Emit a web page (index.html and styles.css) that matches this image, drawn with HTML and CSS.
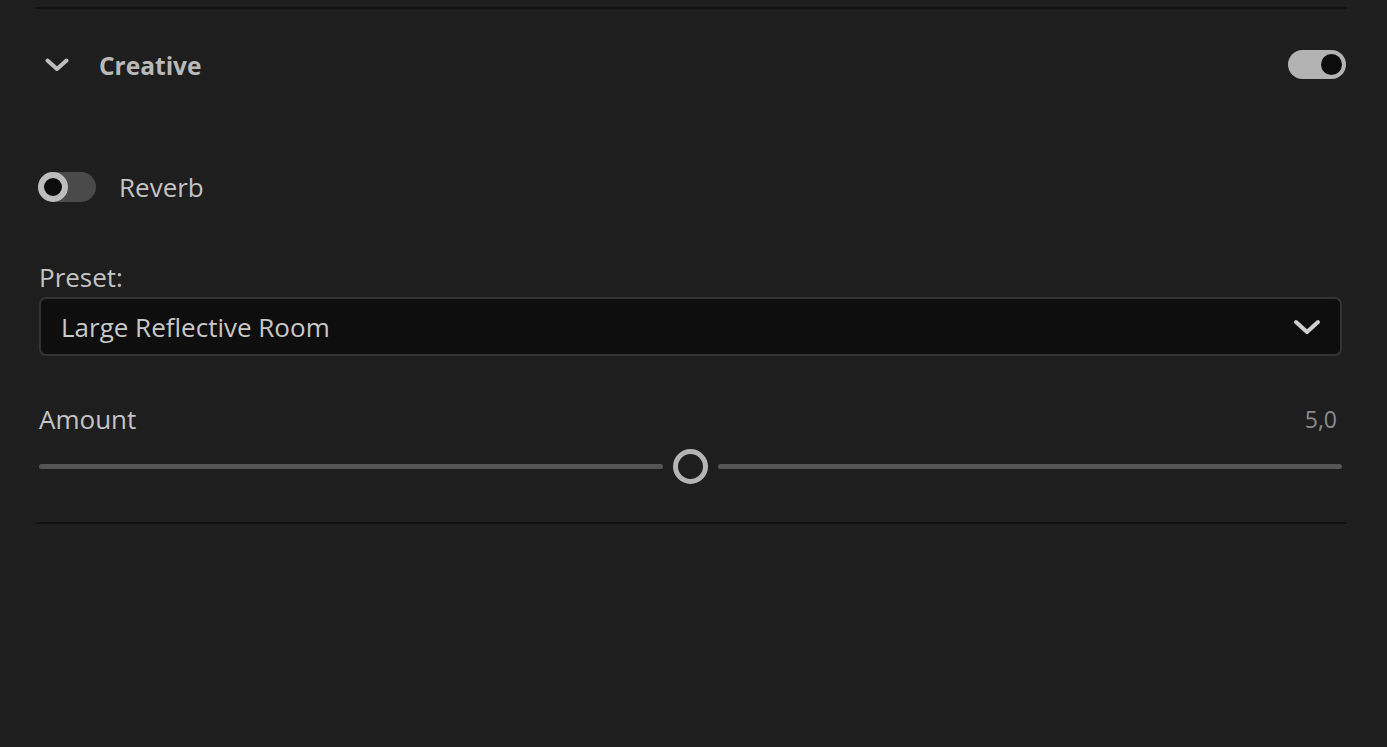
FILE: index.html
```html
<!DOCTYPE html>
<html>
<head>
<meta charset="utf-8">
<link rel="stylesheet" href="styles.css">
</head>
<body>
<div class="panel">
  <div class="rule"></div>
  <div class="header">
    <svg class="chev" width="24" height="14" viewBox="0 0 24 14"><path d="M2.5 2.5 L12 11 L21.5 2.5" fill="none" stroke="#bdbdbd" stroke-width="4" stroke-linecap="round" stroke-linejoin="round"/></svg>
    <span class="title">Creative</span>
    <span class="spacer"></span>
    <span class="toggle on"><span class="knob"></span></span>
  </div>
  <div class="reverb-row">
    <span class="toggle off"><span class="knob"></span></span>
    <span class="label">Reverb</span>
  </div>
  <div class="field-label">Preset:</div>
  <div class="select">
    <span class="select-text">Large Reflective Room</span>
    <svg class="select-chev" width="28" height="16" viewBox="0 0 28 16"><path d="M3 3 L14 13 L25 3" fill="none" stroke="#cfcfcf" stroke-width="4" stroke-linecap="round" stroke-linejoin="round"/></svg>
  </div>
  <div class="amount-row">
    <span class="label">Amount</span>
    <span class="value">5,0</span>
  </div>
  <div class="slider">
    <span class="track"></span>
    <span class="thumb"></span>
    <span class="track"></span>
  </div>
  <div class="rule bottom"></div>
</div>
</body>
</html>
```

FILE: styles.css
```css
html, body {
  margin: 0;
  padding: 0;
  background: #1e1e1e;
  width: 1387px;
  height: 747px;
  overflow: hidden;
}
body {
  font-family: "Open Sans", "Noto Sans", sans-serif;
  color: #c4c4c4;
}
.panel {
  padding: 0 41px 0 36px;
}
.rule {
  margin-top: 7px;
  height: 2px;
  background: #101010;
}
.rule.bottom {
  margin-top: 38px;
}
.header {
  height: 111px;
  display: flex;
  align-items: center;
}
.chev {
  margin-left: 9px;
  margin-right: 30px;
  display: block;
}
.title {
  font-size: 24.5px;
  font-weight: 700;
  color: #b9b9b9;
  line-height: 30px;
  position: relative;
  top: 1px;
}
.spacer { flex: 1; }
.toggle {
  position: relative;
  display: inline-block;
  width: 58px;
  height: 29px;
  border-radius: 15px;
  box-sizing: border-box;
}
.toggle.on {
  background: #b3b3b3;
}
.toggle.on .knob {
  position: absolute;
  right: 4px;
  top: 4px;
  width: 21px;
  height: 21px;
  border-radius: 50%;
  background: #0c0c0c;
}
.toggle.off {
  background: #4a4a4a;
  height: 30px;
}
.toggle.off .knob {
  position: absolute;
  left: 0;
  top: 0;
  width: 30px;
  height: 30px;
  box-sizing: border-box;
  border-radius: 50%;
  border: 6px solid #bdbdbd;
  background: #0c0c0c;
}
.reverb-row {
  margin-top: 52px;
  margin-left: 2px;
  height: 30px;
  display: flex;
  align-items: center;
  gap: 23px;
}
.label {
  font-size: 26px;
  line-height: 30px;
  color: #c4c4c4;
}
.field-label {
  margin-top: 60px;
  margin-left: 3px;
  font-size: 26px;
  line-height: 30px;
  color: #c4c4c4;
}
.select {
  margin: 5px 4px 0 3px;
  height: 59px;
  box-sizing: border-box;
  border: 2px solid #343434;
  border-radius: 7px;
  background: #0e0e0e;
  display: flex;
  align-items: center;
  padding: 0 19px 0 20px;
}
.select-text {
  flex: 1;
  font-size: 26px;
  line-height: 30px;
  color: #c8c8c8;
}
.select-chev { display: block; }
.amount-row {
  margin-top: 48px;
  margin-left: 3px;
  margin-right: 9px;
  display: flex;
  justify-content: space-between;
  align-items: center;
}
.value {
  font-size: 23px;
  line-height: 30px;
  color: #8a8a8a;
}
.slider {
  margin: 15px 4px 0 3px;
  height: 35px;
  display: flex;
  align-items: center;
  gap: 10px;
}
.track {
  flex: 1;
  height: 5px;
  border-radius: 3px;
  background: #555555;
}
.thumb {
  width: 35px;
  height: 35px;
  box-sizing: border-box;
  border-radius: 50%;
  border: 5px solid #b4b4b4;
  background: #1e1e1e;
}
```
